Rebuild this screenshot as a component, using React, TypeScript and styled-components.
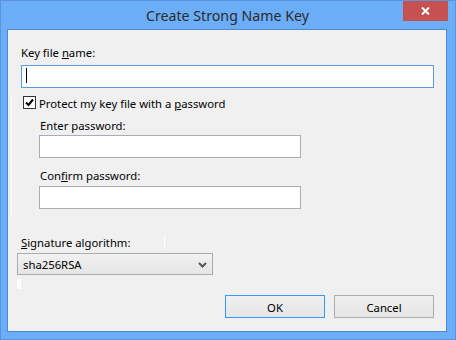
import React from "react";
import styled, { createGlobalStyle } from "styled-components";

const GlobalStyle = createGlobalStyle`
  html, body { margin: 0; padding: 0; background: #6badf6; }
  * { box-sizing: border-box; }
`;

const FONT = `"Noto Sans", "Open Sans", sans-serif`;

const Window = styled.div`
  position: relative;
  width: 456px;
  height: 340px;
  border: 1px solid #5a93da;
  background: #6badf6;
  display: flex;
  flex-direction: column;
  padding: 0 8px 7px 6px;
  font-family: ${FONT};
`;

const TitleBar = styled.div`
  height: 28px;
  display: flex;
  align-items: center;
  justify-content: center;
  font-size: 14.2px;
  color: #2b2b2b;
  padding-left: 1px;
  padding-top: 1px;
`;

const CloseButton = styled.button`
  position: absolute;
  top: 0;
  right: 7px;
  width: 45px;
  height: 20px;
  border: none;
  padding: 0;
  background: #c75050;
  display: flex;
  align-items: center;
  justify-content: center;
`;

const Client = styled.div`
  flex: 1;
  border: 1px solid #5088cc;
  background: #f0f0f0;
  padding: 13px 12px 0 13px;
  display: flex;
  flex-direction: column;
  position: relative;
  font-size: 11.3px;
  color: #000;
`;

const Label = styled.div<{ $indent?: number; $mt?: number }>`
  line-height: 20px;
  height: 16px;
  margin-left: ${(p) => p.$indent ?? 0}px;
  margin-top: ${(p) => p.$mt ?? 0}px;
  white-space: nowrap;
`;

const FieldWrap = styled.div<{ $indent?: number; $width?: number; $mt?: number }>`
  position: relative;
  margin-left: ${(p) => p.$indent ?? 0}px;
  margin-top: ${(p) => p.$mt ?? 0}px;
  width: ${(p) => (p.$width ? `${p.$width}px` : "auto")};
`;

const TextBox = styled.input<{ $focused?: boolean }>`
  display: block;
  width: 100%;
  height: 23px;
  margin: 0;
  border: 1px solid ${(p) => (p.$focused ? "#569de5" : "#abadb3")};
  background: #fff;
  outline: none;
  padding: 0 4px;
  font-family: ${FONT};
  font-size: 11.3px;
`;

const Caret = styled.span`
  position: absolute;
  left: 5px;
  top: 3px;
  width: 1px;
  height: 15px;
  background: #000;
`;

const CheckRow = styled.label`
  display: flex;
  align-items: flex-start;
  height: 16px;
  margin-top: 5px;
  margin-left: 2px;
  gap: 3px;
  line-height: 22px;
  white-space: nowrap;
`;

const CheckBox = styled.span`
  flex: none;
  width: 13px;
  height: 13px;
  border: 1px solid #333;
  background: #fff;
  display: flex;
  align-items: center;
  justify-content: center;
  margin-top: 3px;
`;

const CheckText = styled.span`
  height: 16px;
`;

const Select = styled.div`
  margin-top: 4px;
  margin-left: -4px;
  width: 196px;
  height: 22px;
  border: 1px solid #acacac;
  background: linear-gradient(#f2f2f2, #e5e5e5);
  display: flex;
  align-items: center;
  justify-content: space-between;
  padding: 1px 5px 0 5px;
  line-height: 16px;
`;

const Footer = styled.div`
  margin-top: 20px;
  display: flex;
  justify-content: flex-end;
  gap: 9px;
`;

const Button = styled.button<{ $default?: boolean }>`
  width: 100px;
  height: 23px;
  margin: 0;
  padding: 1px 0 0;
  border: 1px solid ${(p) => (p.$default ? "#3399ff" : "#acacac")};
  background: linear-gradient(#f0f0f0, #e5e5e5);
  font-family: ${FONT};
  font-size: 11.3px;
  color: #000;
`;

const Glint = styled.span<{ $x: number; $y: number; $w: number; $h: number }>`
  position: absolute;
  left: ${(p) => p.$x}px;
  top: ${(p) => p.$y}px;
  width: ${(p) => p.$w}px;
  height: ${(p) => p.$h}px;
  background: #fdfdfd;
`;

export default function App() {
  return (
    <>
      <GlobalStyle />
      <Window>
        <TitleBar>Create Strong Name Key</TitleBar>
        <CloseButton aria-label="Close">
          <svg width="9" height="8" viewBox="0 0 9 8">
            <path d="M1 0.5 L8 7.5 M8 0.5 L1 7.5" stroke="#fff" strokeWidth="2" />
          </svg>
        </CloseButton>
        <Client>
          <Glint $x={3} $y={66} $w={1} $h={120} />
          <Glint $x={156} $y={205} $w={1} $h={14} />
          <Glint $x={9} $y={249} $w={4} $h={10} />
          <Label>
            Key file <u>n</u>ame:
          </Label>
          <FieldWrap $mt={6}>
            <TextBox $focused readOnly value="" />
            <Caret />
          </FieldWrap>
          <CheckRow>
            <CheckBox>
              <svg width="9" height="9" viewBox="0 0 9 9">
                <path d="M1 4.5 L3.5 7 L8 1.5" stroke="#000" strokeWidth="2" fill="none" />
              </svg>
            </CheckBox>
            <CheckText>
              Protect my key file with a <u>p</u>assword
            </CheckText>
          </CheckRow>
          <Label $indent={19} $mt={7}>Enter password:</Label>
          <FieldWrap $indent={18} $width={262} $mt={3}>
            <TextBox readOnly value="" />
          </FieldWrap>
          <Label $indent={19} $mt={8}>
            Con<u>f</u>irm password:
          </Label>
          <FieldWrap $indent={18} $width={262} $mt={4}>
            <TextBox readOnly value="" />
          </FieldWrap>
          <Label $mt={24}>
            <u>S</u>ignature algorithm:
          </Label>
          <Select>
            <span>sha256RSA</span>
            <svg width="9" height="6" viewBox="0 0 9 6">
              <path d="M1 1 L4.5 4.5 L8 1" stroke="#555" strokeWidth="2" fill="none" />
            </svg>
          </Select>
          <Footer>
            <Button $default>OK</Button>
            <Button>Cancel</Button>
          </Footer>
        </Client>
      </Window>
    </>
  );
}
